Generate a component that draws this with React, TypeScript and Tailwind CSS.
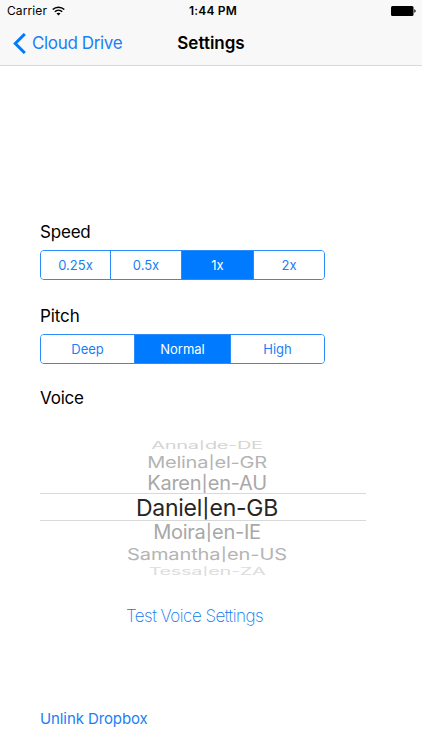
import clsx from 'clsx';

interface SegmentedProps {
  options: { label: string; width: string }[];
  selected: string;
}

const speeds = [
  { label: '0.25x', width: 'w-[69px]' },
  { label: '0.5x', width: 'w-[71px]' },
  { label: '1x', width: 'w-[72px]' },
  { label: '2x', width: 'w-[71px]' },
];

const pitches = [
  { label: 'Deep', width: 'w-[93px]' },
  { label: 'Normal', width: 'w-[96px]' },
  { label: 'High', width: 'w-[94px]' },
];

// Rows shrink and fade towards the edges of the wheel
const voices = [
  { name: 'Anna', locale: 'de-DE', row: 'h-[15px] text-[#d4d4d4]', text: 'text-[20px] scale-y-[0.5] tracking-[-0.35px]' },
  { name: 'Melina', locale: 'el-GR', row: 'h-[19px] text-[#b4b4b4]', text: 'text-[20px] scale-y-[0.8] tracking-[-0.25px]' },
  { name: 'Karen', locale: 'en-AU', row: 'h-[22px] pt-0.5 text-[#a8a8a8]', text: 'text-[20px] scale-y-[0.98] tracking-[-0.25px]' },
  { name: 'Daniel', locale: 'en-GB', row: 'h-7 border-y border-[#d9d9d9] pt-0.5 text-[#262626]', text: 'text-[23px] tracking-[-0.25px]' },
  { name: 'Moira', locale: 'en-IE', row: 'h-[22px] text-[#a8a8a8]', text: 'text-[20px] scale-y-[0.98] tracking-[-0.25px]' },
  { name: 'Samantha', locale: 'en-US', row: 'h-[21px] text-[#b4b4b4]', text: 'text-[20px] scale-y-[0.8] tracking-[-0.1px]' },
  { name: 'Tessa', locale: 'en-ZA', row: 'h-[13px] text-[#dcdcdc]', text: 'text-[20px] scale-y-[0.5] tracking-[-0.4px]' },
];

const Segmented = ({ options, selected }: SegmentedProps) => (
  <div className="flex h-[30px] w-[285px] overflow-hidden rounded-[4px] border border-[#2b8bf8] text-[13px]">
    {options.map((option, i) => (
      <button
        key={option.label}
        className={clsx(
          'flex shrink-0 items-center justify-center pt-px',
          option.width,
          i > 0 && 'border-l border-[#2b8bf8]',
          option.label === selected ? 'bg-[#007aff] text-white' : 'bg-white text-[#1a80f5]',
        )}
      >
        {option.label}
      </button>
    ))}
  </div>
);

const StatusBar = () => (
  <div className="grid h-[22px] grid-cols-3 items-center pl-[7px] pr-[6px] text-xs leading-none">
    <div className="flex items-center gap-[5px]">
      <span className="tracking-[0.1px]">Carrier</span>
      <svg width="13" height="10" viewBox="0 0 13 10" fill="none" stroke="#000" strokeWidth="1.5">
        <path d="M0.7 3.6C3.9 0.3 9.1 0.3 12.3 3.6" />
        <path d="M2.8 5.8C4.9 3.7 8.1 3.7 10.2 5.8" />
        <path d="M6.5 9.5L4.5 7.4C5.6 6.4 7.4 6.4 8.5 7.4Z" fill="#000" stroke="none" />
      </svg>
    </div>
    <span className="pl-[3px] text-center font-semibold tracking-[0.15px]">1:44 PM</span>
    <svg className="justify-self-end" width="25" height="10" viewBox="0 0 25 10">
      <rect width="22.5" height="10" rx="1.5" />
      <path d="M23.3 3.2C25.1 3.6 25.1 6.4 23.3 6.8Z" />
    </svg>
  </div>
);

const NavBar = () => (
  <div className="grid h-[43px] grid-cols-[1fr_auto_1fr] items-center text-[17px]">
    <button className="flex items-center gap-[6px] pl-[13px] tracking-[-0.35px] text-[#1a80f5]">
      <svg width="13" height="21" viewBox="0 0 13 21" fill="none" stroke="#007aff" strokeWidth="3">
        <path d="M11.8 1L2.3 10.5L11.8 20" />
      </svg>
      Cloud Drive
    </button>
    <h1 className="font-semibold">Settings</h1>
  </div>
);

export default function App() {
  return (
    <div className="flex h-[750px] w-[422px] flex-col bg-white font-['Inter','Liberation_Sans',sans-serif] text-black">
      <header className="h-[66px] shrink-0 border-b border-[#d9d9d9] bg-[#f8f8f8]">
        <StatusBar />
        <NavBar />
      </header>

      <main className="flex flex-col items-start pl-10 pt-[154px]">
        <h2 className="mb-1.5 text-[17px] leading-6 tracking-[-0.2px]">Speed</h2>
        <Segmented options={speeds} selected="1x" />

        <h2 className="mb-1.5 mt-6 text-[17px] leading-6 tracking-[-0.1px]">Pitch</h2>
        <Segmented options={pitches} selected="Normal" />

        <h2 className="mt-[22px] text-[17px] leading-6 tracking-[-0.2px]">Voice</h2>
        <div className="mt-[27px] flex w-[326px] flex-col">
          {voices.map((voice) => (
            <div key={voice.name} className={clsx('flex items-center justify-center', voice.row)}>
              <span className={clsx('whitespace-nowrap pl-2 leading-none', voice.text)}>
                {voice.name}
                <span className="inline-block scale-y-[0.82]">|</span>
                {voice.locale}
              </span>
            </div>
          ))}
        </div>

        <button className="ml-[86px] mt-[27px] text-[17px] font-extralight leading-6 tracking-[-0.5px] text-[#0a78f0]">
          Test Voice Settings
        </button>
        <button className="mt-[79px] text-[15px] leading-6 tracking-[-0.1px] text-[#1a80f5]">Unlink Dropbox</button>
      </main>
    </div>
  );
}
